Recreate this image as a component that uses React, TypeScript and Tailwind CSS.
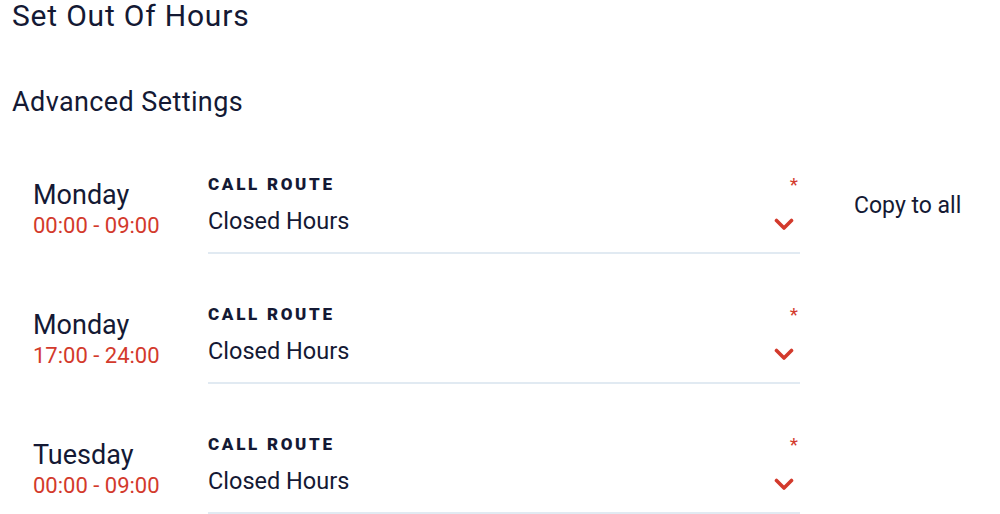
const rows = [
    { day: 'Monday', time: '00:00 - 09:00', copy: true },
    { day: 'Monday', time: '17:00 - 24:00', copy: false },
    { day: 'Tuesday', time: '00:00 - 09:00', copy: false },
]

function Chevron() {
    return (
        <svg width="20" height="13" viewBox="0 0 20 13" className="text-[#d33a2c] mr-[6px] mt-[6px]">
            <path d="M2.5 2.5 L10 10 L17.5 2.5" fill="none" stroke="currentColor" strokeWidth="3.6" strokeLinecap="round" strokeLinejoin="round" />
        </svg>
    )
}

export default function App() {
    return (
        <div className="min-h-screen bg-white text-[#141934] font-['Roboto',sans-serif] px-3 overflow-hidden">
            <h1 className="text-[30px] leading-[32px] tracking-[0.8px]">Set Out Of Hours</h1>
            <h2 className="text-[27px] leading-[32px] mt-[54px] tracking-[0.4px]">Advanced Settings</h2>

            <div className="mt-[28px] pl-[21px]">
                {rows.map((row, i) => (
                    <div key={i} className="flex items-start h-[130px]">
                        <div className="w-[175px] shrink-0 pt-[34px]">
                            <div className="text-[27px] leading-[30px]">{row.day}</div>
                            <div className="text-[22px] leading-[26px] mt-[3px] text-[#d33a2c]">{row.time}</div>
                        </div>
                        <div className="w-[592px] shrink-0 pt-[28px]">
                            <div className="border-b-2 border-[#e1eaf2] pb-[17px]">
                                <div className="flex justify-between items-start">
                                    <span className="text-[17px] font-black tracking-[2.7px] leading-[20px]">CALL ROUTE</span>
                                    <span className="text-[#d33a2c] text-[19px] leading-[18px] mt-[2px] mr-[2px]">*</span>
                                </div>
                                <div className="flex justify-between items-center mt-[13px]">
                                    <span className="text-[23.5px] leading-[28px]">Closed Hours</span>
                                    <Chevron />
                                </div>
                            </div>
                        </div>
                        {row.copy && (
                            <div className="ml-[54px] pt-[46px] text-[23px] leading-[28px]">Copy to all</div>
                        )}
                    </div>
                ))}
            </div>
        </div>
    )
}
